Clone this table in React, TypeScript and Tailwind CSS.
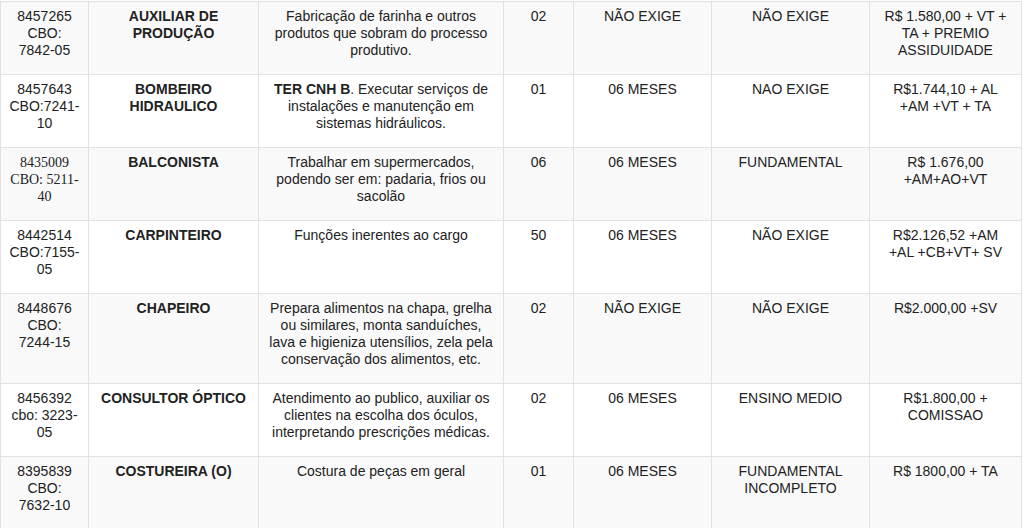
import React from "react";

type Row = {
  code: React.ReactNode;
  serif?: boolean;
  title: string;
  desc: React.ReactNode;
  qty: string;
  exp: string;
  edu: React.ReactNode;
  pay: React.ReactNode;
};

const rows: Row[] = [
  {
    code: "8457265 CBO: 7842-05",
    title: "AUXILIAR DE PRODUÇÃO",
    desc: "Fabricação de farinha e outros produtos que sobram do processo produtivo.",
    qty: "02",
    exp: "NÃO EXIGE",
    edu: "NÃO EXIGE",
    pay: "R$ 1.580,00 + VT + TA + PREMIO ASSIDUIDADE",
  },
  {
    code: "8457643 CBO:7241-10",
    title: "BOMBEIRO HIDRAULICO",
    desc: (
      <>
        <strong>TER CNH B</strong>. Executar serviços de instalações e manutenção em sistemas hidráulicos.
      </>
    ),
    qty: "01",
    exp: "06 MESES",
    edu: "NAO EXIGE",
    pay: "R$1.744,10 + AL +AM +VT + TA",
  },
  {
    code: "8435009 CBO: 5211-40",
    serif: true,
    title: "BALCONISTA",
    desc: "Trabalhar em supermercados, podendo ser em: padaria, frios ou sacolão",
    qty: "06",
    exp: "06 MESES",
    edu: "FUNDAMENTAL",
    pay: "R$ 1.676,00 +AM+AO+VT",
  },
  {
    code: "8442514 CBO:7155-05",
    title: "CARPINTEIRO",
    desc: "Funções inerentes ao cargo",
    qty: "50",
    exp: "06 MESES",
    edu: "NÃO EXIGE",
    pay: "R$2.126,52 +AM +AL +CB+VT+ SV",
  },
  {
    code: "8448676 CBO: 7244-15",
    title: "CHAPEIRO",
    desc: "Prepara alimentos na chapa, grelha ou similares, monta sanduíches, lava e higieniza utensílios, zela pela conservação dos alimentos, etc.",
    qty: "02",
    exp: "NÃO EXIGE",
    edu: "NÃO EXIGE",
    pay: "R$2.000,00 +SV",
  },
  {
    code: "8456392 cbo: 3223-05",
    title: "CONSULTOR ÓPTICO",
    desc: "Atendimento ao publico, auxiliar os clientes na escolha dos óculos, interpretando prescrições médicas.",
    qty: "02",
    exp: "06 MESES",
    edu: "ENSINO MEDIO",
    pay: "R$1.800,00 + COMISSAO",
  },
  {
    code: "8395839 CBO: 7632-10",
    title: "COSTUREIRA (O)",
    desc: "Costura de peças em geral",
    qty: "01",
    exp: "06 MESES",
    edu: (
      <>
        FUNDAMENTAL
        <br />
        INCOMPLETO
      </>
    ),
    pay: "R$ 1800,00 + TA",
  },
];

const td =
  "border border-[#e2e2e2] align-top text-center px-[8px] pt-[6px] pb-[15px]";
const tdPay =
  "border border-[#e2e2e2] align-top text-center px-[10px] pt-[6px] pb-[15px]";

export default function App() {
  return (
    <div className="w-[1024px] h-[528px] overflow-hidden bg-white pt-[1px]">
      <table
        className="border-collapse table-fixed w-[1021px] text-[14px] leading-[17px] text-[#222]"
        style={{ fontFamily: '"Liberation Sans", Arial, sans-serif' }}
      >
        <colgroup>
          <col className="w-[88px]" />
          <col className="w-[170px]" />
          <col className="w-[245px]" />
          <col className="w-[70px]" />
          <col className="w-[138px]" />
          <col className="w-[158px]" />
          <col className="w-[152px]" />
        </colgroup>
        <tbody>
          {rows.map((r, i) => (
            <tr key={i} className={i % 2 === 0 ? "bg-[#f9f9f9]" : "bg-white"}>
              <td
                className={td}
                style={
                  r.serif
                    ? { fontFamily: '"Liberation Serif", "Times New Roman", serif' }
                    : undefined
                }
              >
                {r.code}
              </td>
              <td className={td + " font-bold"}>{r.title}</td>
              <td className={td}>{r.desc}</td>
              <td className={td}>{r.qty}</td>
              <td className={td}>{r.exp}</td>
              <td className={td}>{r.edu}</td>
              <td className={tdPay}>{r.pay}</td>
            </tr>
          ))}
        </tbody>
      </table>
    </div>
  );
}
